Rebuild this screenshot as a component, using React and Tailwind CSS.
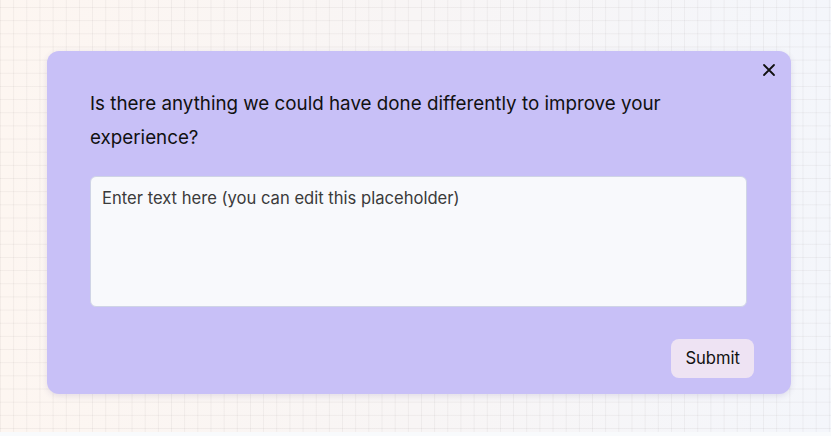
import { useState } from "react";

export default function App() {
  const [text, setText] = useState("");

  return (
    <div className="w-[831px] h-[436px] bg-[#f8fafc] font-['Inter','Liberation_Sans',sans-serif]">
      <div className="relative h-[432px] overflow-hidden bg-[linear-gradient(90deg,#fdf6f1_0%,#f8f5f5_50%,#f4f6fb_100%)]">
        {/* grid */}
        <div className="absolute inset-0 bg-[linear-gradient(to_right,rgba(120,110,110,0.08)_1px,transparent_1px),linear-gradient(to_bottom,rgba(120,110,110,0.08)_1px,transparent_1px)] bg-[size:13.17px_13.17px] bg-[position:0px_7px]" />

        <div className="relative pt-[51px] pl-[47px]">
          <div className="relative w-[744px] h-[343px] bg-[#c8c0f7] rounded-[12px] shadow-[0_2px_6px_rgba(60,40,120,0.12)] pt-[36px] pl-[43px] pr-[37px] pb-[16px] flex flex-col">
            <button className="absolute right-[15px] top-[12px] w-[14px] h-[14px] flex items-center justify-center text-[#111]">
              <svg width="14" height="14" viewBox="0 0 14 14" fill="none" stroke="currentColor" strokeWidth="1.8" strokeLinecap="round">
                <path d="M2 2L12 12M12 2L2 12" />
              </svg>
            </button>

            <p className="text-[18.8px] leading-[34px] text-[#111] w-[640px]">
              Is there anything we could have done differently to improve your experience?
            </p>

            <textarea
              value={text}
              onChange={(e) => setText(e.target.value)}
              placeholder="Enter text here (you can edit this placeholder)"
              className="mt-[21px] w-[657px] h-[131px] resize-none rounded-[6px] border border-[#cfd4e6] bg-[#f8f9fc] px-[11px] py-[9px] text-[16.6px] leading-[24px] text-[#333] placeholder:text-[#3b3b3b] outline-none"
            />

            <div className="mt-auto flex justify-end">
              <button className="h-[39px] px-[14px] rounded-[8px] bg-[#eee3f3] text-[16.6px] text-[#111]">
                Submit
              </button>
            </div>
          </div>
        </div>
      </div>
    </div>
  );
}
